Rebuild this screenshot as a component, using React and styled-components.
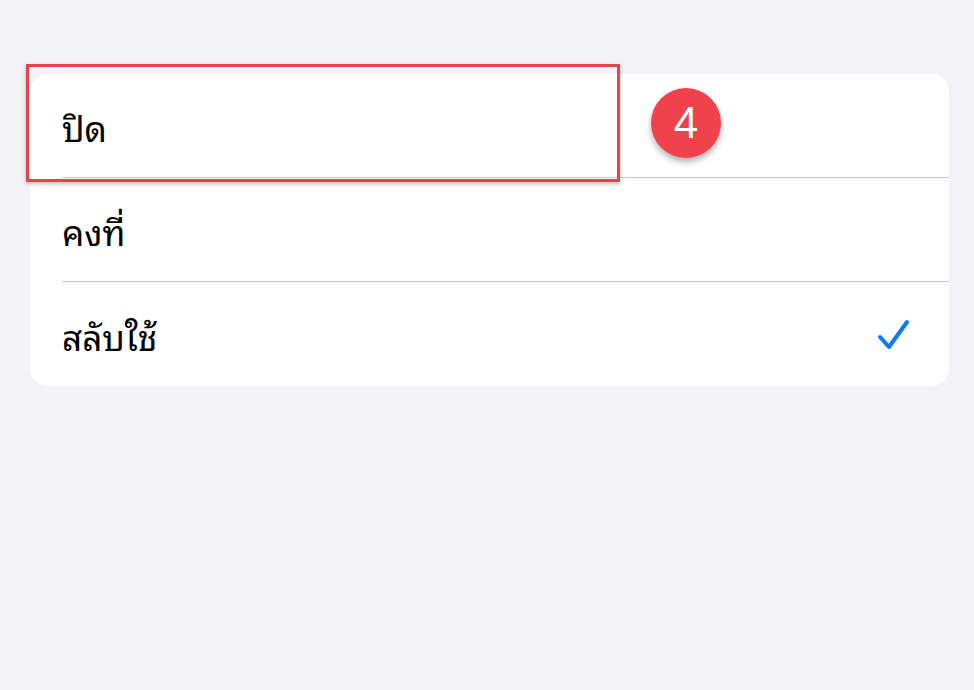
import React from 'react';
import styled, { createGlobalStyle } from 'styled-components';

const GlobalStyle = createGlobalStyle`
  html, body {
    margin: 0;
    padding: 0;
    background: #f2f2f7;
  }
  body {
    font-family: "Noto Sans Thai Looped", "Noto Serif Thai", "Noto Sans Thai", "Noto Sans", "Liberation Sans", sans-serif;
  }
`;

const Page = styled.div`
  width: 974px;
  height: 690px;
  box-sizing: border-box;
  padding: 74px 25px 0 30px;
  background: #f2f2f7;
  position: relative;
  overflow: hidden;
`;

const Card = styled.div`
  background: #ffffff;
  border-radius: 18px;
  overflow: hidden;
  display: flex;
  flex-direction: column;
`;

const Row = styled.div`
  height: 104px;
  margin-left: 32px;
  padding-right: 38px;
  padding-top: 2px;
  display: flex;
  align-items: center;
  justify-content: space-between;
  box-sizing: border-box;
  border-bottom: ${(p) => (p.last ? 'none' : '1px solid #c8c8cc')};
`;

const Label = styled.span`
  font-size: 35px;
  color: #000000;
  line-height: 1;
`;

const Highlight = styled.div`
  position: absolute;
  left: 26px;
  top: 64px;
  width: 594px;
  height: 118px;
  box-sizing: border-box;
  border: 3px solid #e5444b;
  box-shadow: 0 2px 4px rgba(0, 0, 0, 0.25);
`;

const Badge = styled.div`
  position: absolute;
  left: 651px;
  top: 88px;
  width: 70px;
  height: 70px;
  border-radius: 50%;
  background: #f0424a;
  color: #ffffff;
  font-family: "Liberation Sans", Arial, sans-serif;
  font-size: 44px;
  display: flex;
  align-items: center;
  justify-content: center;
  box-shadow: 0 4px 6px rgba(0, 0, 0, 0.3);
`;

const Check = () => (
  <svg width="34" height="32" viewBox="0 0 34 32" fill="none">
    <path
      d="M3 18 L12 28 L30 3"
      stroke="#0a7aff"
      strokeWidth="4"
      strokeLinecap="round"
      strokeLinejoin="round"
    />
  </svg>
);

const options = [
  { label: 'ปิด', selected: false },
  { label: 'คงที่', selected: false },
  { label: 'สลับใช้', selected: true },
];

export default function App() {
  return (
    <Page>
      <GlobalStyle />
      <Card>
        {options.map((o, i) => (
          <Row key={o.label} last={i === options.length - 1}>
            <Label>{o.label}</Label>
            {o.selected && <Check />}
          </Row>
        ))}
      </Card>
      <Highlight />
      <Badge>4</Badge>
    </Page>
  );
}
